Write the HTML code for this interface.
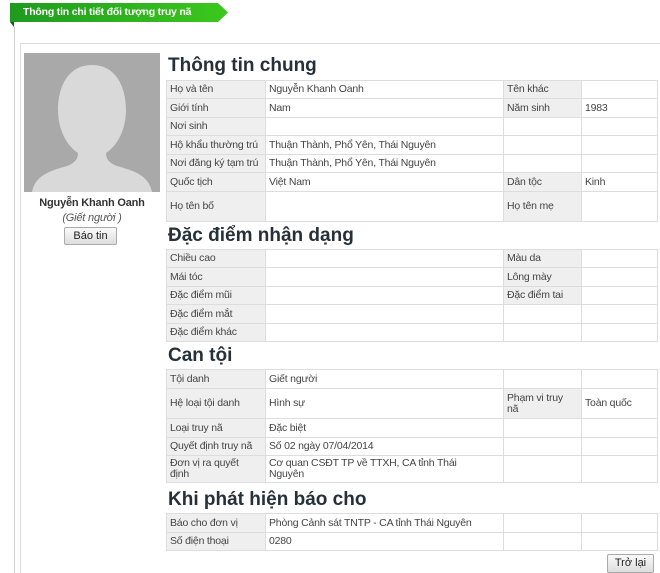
<!DOCTYPE html>
<html><head><meta charset="utf-8"><style>
html,body{margin:0;width:660px;height:573px;overflow:hidden}
body{background:#fff;font-family:"Liberation Sans",Arial,sans-serif;position:relative;color:#333}
.ban{position:absolute;left:10px;top:3px;width:218px;height:19px;background:linear-gradient(90deg,#1f9a1f,#3cc81e);clip-path:polygon(0 0,208px 0,218px 9.5px,208px 19px,0 19px);color:#fff;font-weight:bold;font-size:10.5px;letter-spacing:-0.2px;line-height:19px;padding-left:13px;box-sizing:border-box}
.tri{position:absolute;left:10px;top:22px;width:0;height:0;border-top:5px solid #135e13;border-left:4px solid transparent}
.vl{position:absolute;left:14px;top:27px;width:1px;height:546px;background:#ccc}
.box{position:absolute;left:20px;top:43px;width:639px;height:529px;border:1px solid #ddd;border-bottom:none;border-right:none}
.photo{position:absolute;left:24px;top:53px;width:136px;height:139px;background:#a9a9a9;overflow:hidden}
.nm{position:absolute;left:24px;width:136px;text-align:center;font-size:11px;letter-spacing:-0.2px}
.btn{position:absolute;font-size:11px;border:1px solid #aaa;background:linear-gradient(#fafafa,#ddd);text-align:center;line-height:16px;border-radius:2px;color:#222}
h2{position:absolute;left:168px;margin:0;font-size:19px;font-weight:bold;color:#263039;line-height:22px}
table{position:absolute;left:166px;width:492px;border-collapse:collapse;font-size:10.5px;letter-spacing:-0.2px;table-layout:fixed}
td{border:1px solid #ddd;padding:0 3px;line-height:11px;color:#444;vertical-align:middle;white-space:nowrap;overflow:hidden}
td.l{background:#efefef}
</style></head><body>
<div class="ban">Thông tin chi tiết đối tượng truy nã</div>
<div class="tri"></div>
<div class="vl"></div>
<div class="box"></div>
<div class="photo"><svg width="136" height="139" viewBox="0 0 136 139"><path fill="#d9d9d9" d="M68 12c-24 0-34 22-34 45 0 20 9 36 20 43 0 6-3 10-11 13-18 5-32 10-35 26h120c-3-16-17-21-35-26-8-3-11-7-11-13 11-7 20-23 20-43 0-23-10-45-34-45z"/></svg></div>
<div class="nm" style="top:197px;font-weight:bold;color:#333">Nguyễn Khanh Oanh</div>
<div class="nm" style="top:212px;font-style:italic;color:#555">(Giết người )</div>
<div class="btn" style="left:64px;top:227px;width:51px;height:16px">Báo tin</div>
<h2 style="top:55px">Thông tin chung</h2>
<table style="top:80px"><col style="width:99px"><col style="width:238px"><col style="width:78px"><col>
<tr style="height:18px"><td class="l">Họ và tên</td><td>Nguyễn Khanh Oanh</td><td class="l">Tên khác</td><td></td></tr>
<tr style="height:19px"><td class="l">Giới tính</td><td>Nam</td><td class="l">Năm sinh</td><td>1983</td></tr>
<tr style="height:18px"><td class="l">Nơi sinh</td><td></td><td></td><td></td></tr>
<tr style="height:19px"><td class="l">Hộ khẩu thường trú</td><td>Thuận Thành, Phổ Yên, Thái Nguyên</td><td></td><td></td></tr>
<tr style="height:18px"><td class="l">Nơi đăng ký tạm trú</td><td>Thuận Thành, Phổ Yên, Thái Nguyên</td><td></td><td></td></tr>
<tr style="height:19px"><td class="l">Quốc tịch</td><td>Việt Nam</td><td class="l">Dân tộc</td><td>Kinh</td></tr>
<tr style="height:30px"><td class="l">Họ tên bố</td><td></td><td class="l">Họ tên mẹ</td><td></td></tr>
</table>
<h2 style="top:225px">Đặc điểm nhận dạng</h2>
<table style="top:249px"><col style="width:99px"><col style="width:238px"><col style="width:78px"><col>
<tr style="height:18px"><td class="l">Chiều cao</td><td></td><td class="l">Màu da</td><td></td></tr>
<tr style="height:19px"><td class="l">Mái tóc</td><td></td><td class="l">Lông mày</td><td></td></tr>
<tr style="height:18px"><td class="l">Đặc điểm mũi</td><td></td><td class="l">Đặc điểm tai</td><td></td></tr>
<tr style="height:19px"><td class="l">Đặc điểm mắt</td><td></td><td></td><td></td></tr>
<tr style="height:18px"><td class="l">Đặc điểm khác</td><td></td><td></td><td></td></tr>
</table>
<h2 style="top:345px">Can tội</h2>
<table style="top:369px"><col style="width:99px"><col style="width:238px"><col style="width:78px"><col>
<tr style="height:19px"><td class="l">Tội danh</td><td>Giết người</td><td></td><td></td></tr>
<tr style="height:30px"><td class="l">Hệ loại tội danh</td><td>Hình sự</td><td class="l">Phạm vi truy<br>nã</td><td>Toàn quốc</td></tr>
<tr style="height:19px"><td class="l">Loại truy nã</td><td>Đặc biệt</td><td></td><td></td></tr>
<tr style="height:18px"><td class="l">Quyết định truy nã</td><td>Số 02 ngày 07/04/2014</td><td></td><td></td></tr>
<tr style="height:27px"><td class="l">Đơn vị ra quyết<br>định</td><td>Cơ quan CSĐT TP về TTXH, CA tỉnh Thái<br>Nguyên</td><td></td><td></td></tr>
</table>
<h2 style="top:489px">Khi phát hiện báo cho</h2>
<table style="top:513px"><col style="width:99px"><col style="width:238px"><col style="width:78px"><col>
<tr style="height:19px"><td class="l">Báo cho đơn vị</td><td>Phòng Cảnh sát TNTP - CA tỉnh Thái Nguyên</td><td></td><td></td></tr>
<tr style="height:18px"><td class="l">Số điện thoại</td><td>0280</td><td></td><td></td></tr>
</table>
<div class="btn" style="left:607px;top:554px;width:45px;height:17px">Trở lại</div>
</body></html>
